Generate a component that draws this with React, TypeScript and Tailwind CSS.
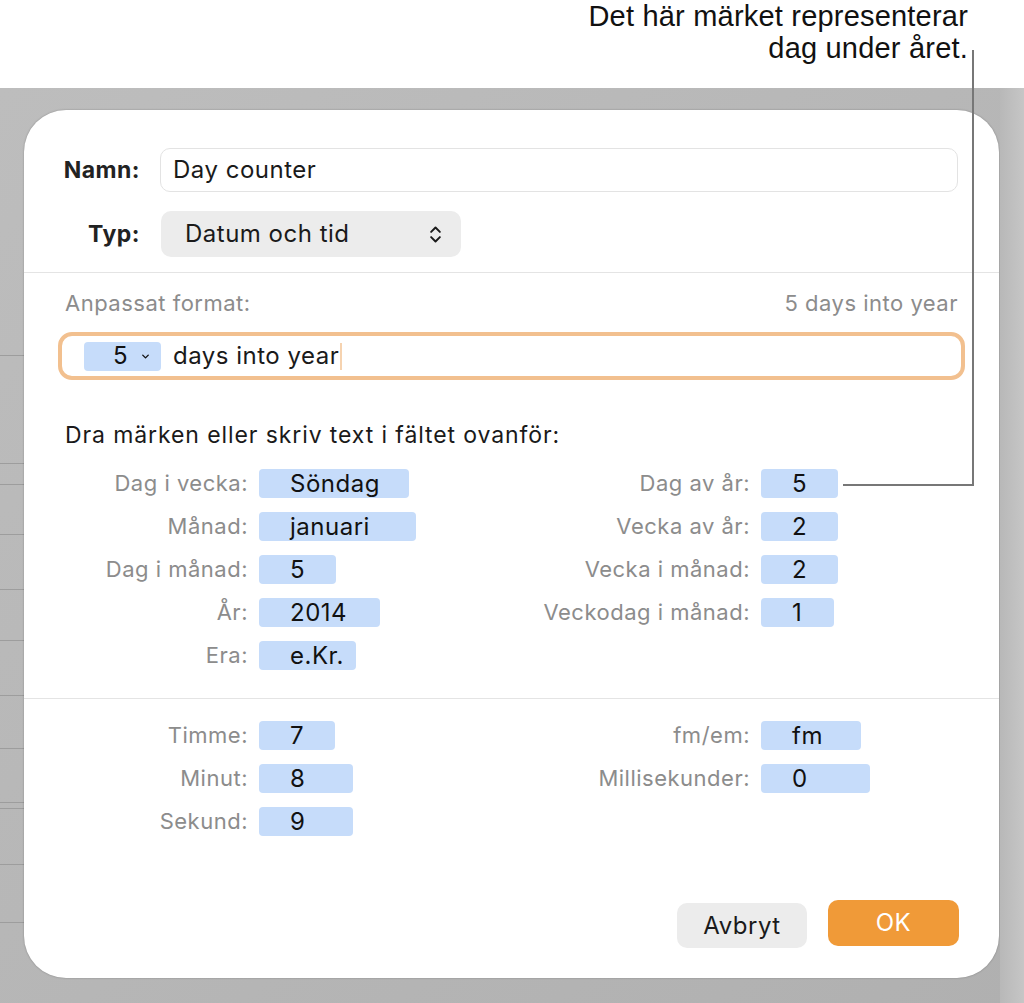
import { ChevronsUpDown, ChevronDown } from 'lucide-react';

type Row = { label: string; value: string; w: string };

const dateLeft: Row[] = [
  { label: 'Dag i vecka:', value: 'Söndag', w: 'w-[150px]' },
  { label: 'Månad:', value: 'januari', w: 'w-[157px]' },
  { label: 'Dag i månad:', value: '5', w: 'w-[77px]' },
  { label: 'År:', value: '2014', w: 'w-[121px]' },
  { label: 'Era:', value: 'e.Kr.', w: 'w-[97px]' },
];

const dateRight: Row[] = [
  { label: 'Dag av år:', value: '5', w: 'w-[77px]' },
  { label: 'Vecka av år:', value: '2', w: 'w-[77px]' },
  { label: 'Vecka i månad:', value: '2', w: 'w-[77px]' },
  { label: 'Veckodag i månad:', value: '1', w: 'w-[73px]' },
];

const timeLeft: Row[] = [
  { label: 'Timme:', value: '7', w: 'w-[76px]' },
  { label: 'Minut:', value: '8', w: 'w-[94px]' },
  { label: 'Sekund:', value: '9', w: 'w-[94px]' },
];

const timeRight: Row[] = [
  { label: 'fm/em:', value: 'fm', w: 'w-[100px]' },
  { label: 'Millisekunder:', value: '0', w: 'w-[109px]' },
];

// backdrop lines on the sheet behind the dialog (left strip)
const stripRows = [268, 108, 21, 50, 55, 51, 55, 53, 54, 6, 56, 58];

function TokenRow({ row, labelW }: { row: Row; labelW: string }) {
  return (
    <div className="flex items-center h-[29px]">
      <div className={`${labelW} text-right text-[22px] tracking-[0.5px] text-[#8c8c8c] pr-[11px] whitespace-nowrap`}>
        {row.label}
      </div>
      <div
        className={`${row.w} h-[29px] rounded-[4px] bg-[#c6dcfa] pl-[31px] text-[24px] tracking-[0.5px] leading-[29px] text-[#111]`}
      >
        {row.value}
      </div>
    </div>
  );
}

function Columns({ left, right }: { left: Row[]; right: Row[] }) {
  return (
    <div className="flex">
      <div className="w-[500px] flex flex-col gap-[14px]">
        {left.map((r) => (
          <TokenRow key={r.label} row={r} labelW="w-[235px]" />
        ))}
      </div>
      <div className="flex flex-col gap-[14px]">
        {right.map((r) => (
          <TokenRow key={r.label} row={r} labelW="w-[237px]" />
        ))}
      </div>
    </div>
  );
}

export default function App() {
  return (
    <div className="relative w-[1024px] h-[1003px] overflow-hidden bg-white font-['Inter',sans-serif]">
      {/* Callout */}
      <div className="h-[88px] pr-[56px] text-right text-[29px] tracking-[0.2px] leading-[32px] text-[#111] font-['Liberation_Sans',sans-serif]">
        <div>Det här märket representerar</div>
        <div>dag under året.</div>
      </div>

      {/* Backdrop */}
      <div className="flex h-[915px] bg-gradient-to-br from-[#bdbdbd] to-[#b0b0b0]">
        <div className="w-[24px] flex flex-col">
          {stripRows.map((h, i) => (
            <div key={i} style={{ height: h }} className="border-b border-[#9d9d9d] shrink-0" />
          ))}
        </div>

        <div className="w-[975px] pt-[22px]">
          <div className="h-[868px] rounded-[42px] bg-white shadow-[0_0_2px_rgba(0,0,0,0.3)] flex flex-col">
            {/* Name + type */}
            <div className="pt-[38px] pb-[15px] flex flex-col gap-[19px]">
              <div className="flex items-center">
                <div className="w-[116px] text-right text-[23px] tracking-[0.5px] font-bold text-[#222]">Namn:</div>
                <div className="ml-[20px] w-[798px] h-[44px] rounded-[10px] border border-[#e3e3e3] pl-[12px] flex items-center text-[24px] tracking-[0.5px] text-[#1a1a1a]">
                  Day counter
                </div>
              </div>
              <div className="flex items-center">
                <div className="w-[116px] text-right text-[23px] tracking-[0.5px] font-bold text-[#222]">Typ:</div>
                <div className="ml-[21px] w-[300px] h-[46px] rounded-[10px] bg-[#ececec] pl-[24px] pr-[15px] flex items-center justify-between text-[24px] tracking-[0.5px] text-[#1a1a1a]">
                  <span>Datum och tid</span>
                  <ChevronsUpDown className="w-[21px] h-[21px]" strokeWidth={2.2} />
                </div>
              </div>
            </div>

            <div className="h-px bg-[#e4e4e4]" />

            {/* Custom format */}
            <div className="pt-[17px] px-[41px] flex justify-between text-[22px] tracking-[0.5px] leading-[26px] text-[#8c8c8c]">
              <span>Anpassat format:</span>
              <span>5 days into year</span>
            </div>
            <div className="mt-[16px] mx-[34px] h-[48px] rounded-[14px] border-[4px] border-[#f2c08f] pl-[22px] flex items-center">
              <div className="w-[77px] h-[29px] rounded-[4px] bg-[#c6dcfa] pl-[29px] flex items-center gap-[12px] text-[24px] text-[#111]">
                <span>5</span>
                <ChevronDown className="w-[11px] h-[11px]" strokeWidth={3} />
              </div>
              <span className="ml-[12px] text-[24px] tracking-[0.5px] text-[#1a1a1a]">days into year</span>
              <span className="ml-px w-[2px] h-[27px] bg-[#f6d3b0]" />
            </div>

            <div className="mt-[42px] px-[41px] text-[23px] tracking-[0.9px] leading-[26px] text-[#1a1a1a] whitespace-nowrap">
              Dra märken eller skriv text i fältet ovanför:
            </div>

            <div className="mt-[21px]">
              <Columns left={dateLeft} right={dateRight} />
            </div>

            <div className="mt-[28px] h-px bg-[#e4e4e4]" />

            <div className="mt-[22px]">
              <Columns left={timeLeft} right={timeRight} />
            </div>

            <div className="mt-auto pb-[32px] pr-[40px] flex justify-end items-end gap-[21px]">
              <button className="w-[130px] h-[45px] -mb-[2px] rounded-[10px] bg-[#ececec] text-[24px] tracking-[0.5px] text-[#1a1a1a]">
                Avbryt
              </button>
              <button className="w-[131px] h-[46px] rounded-[10px] bg-[#f09a38] text-[24px] tracking-[0.5px] text-white">
                OK
              </button>
            </div>
          </div>
        </div>

        <div className="flex-1 ml-[1px] bg-gradient-to-r from-[#b8b8b8] to-[#c6c6c6]" />
      </div>

      {/* Callout leader line */}
      <svg className="absolute inset-0 pointer-events-none" width="1024" height="1003">
        <polyline points="973,50 973,485 843,485" fill="none" stroke="#777" strokeWidth="2" />
      </svg>
    </div>
  );
}
